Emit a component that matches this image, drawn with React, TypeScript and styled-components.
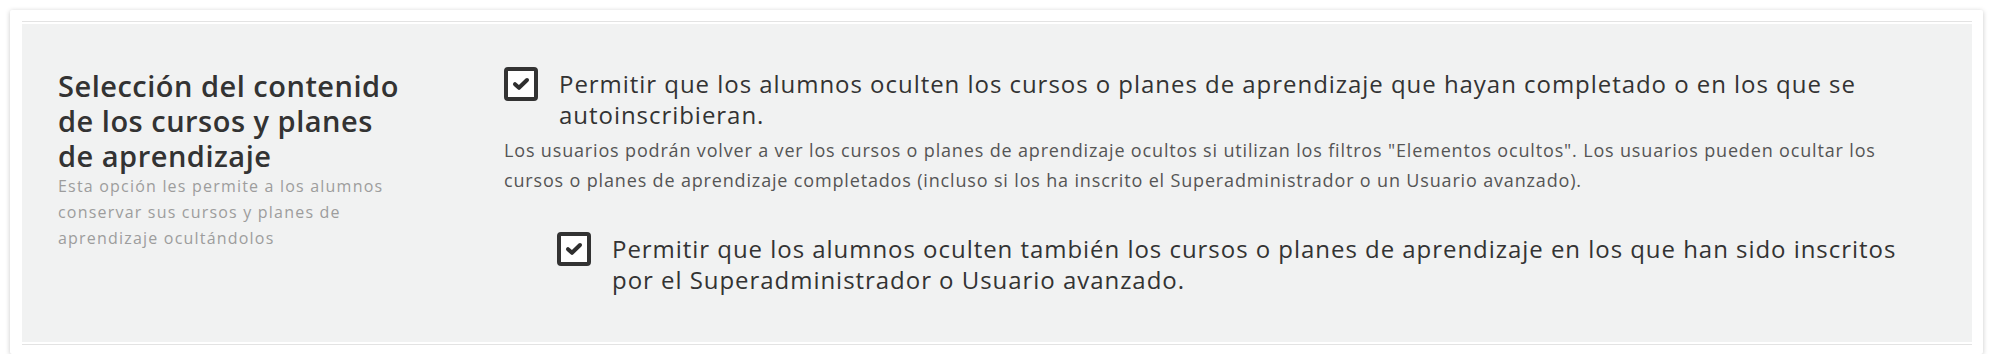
import React, { FunctionComponent } from 'react';
import styled, { createGlobalStyle } from 'styled-components';

const GlobalStyle = createGlobalStyle`
  html, body {
    margin: 0;
    padding: 0;
    background: #ffffff;
  }
  body {
    font-family: 'Open Sans', 'Noto Sans', 'Liberation Sans', sans-serif;
  }
`;

const Page = styled.div`
  padding: 10px 11px 0 10px;
`;

const Card = styled.div`
  background: #ffffff;
  border-radius: 2px;
  box-shadow: 0 1px 5px rgba(0, 0, 0, 0.22);
  padding: 11px 11px 9px 12px;
`;

const Panel = styled.div`
  border-top: 1px solid #e3e3e3;
  border-bottom: 1px solid #e3e3e3;
  padding: 2px 0;
`;

const Section = styled.div`
  display: flex;
  align-items: flex-start;
  background: #f1f2f2;
  padding: 44px 56px 47px 36px;
`;

const Aside = styled.div`
  flex: none;
  width: 348px;
  margin-right: 98px;
`;

const Title = styled.h2`
  margin: 0;
  font-size: 29px;
  font-weight: 600;
  line-height: 35px;
  letter-spacing: 0.5px;
  color: #333333;
`;

const Description = styled.p`
  margin: 0;
  font-size: 16px;
  line-height: 26px;
  letter-spacing: 1.2px;
  color: #9d9d9d;
`;

const Content = styled.div`
  flex: 1;
  min-width: 0;
`;

const OptionRow = styled.label<{ $indent?: number; $spaceTop?: number }>`
  display: flex;
  align-items: flex-start;
  gap: 21px;
  margin-left: ${(p) => p.$indent || 0}px;
  margin-top: ${(p) => p.$spaceTop || 0}px;
  cursor: pointer;
`;

const Box = styled.span`
  flex: none;
  display: flex;
  align-items: center;
  justify-content: center;
  box-sizing: border-box;
  width: 34px;
  height: 34px;
  border: 4px solid #333333;
  border-radius: 4px;
  background: #ffffff;
  margin-top: -1px;
`;

const OptionText = styled.span`
  font-size: 24px;
  line-height: 31px;
  letter-spacing: 0.96px;
  color: #333333;
`;

const HelpText = styled.p`
  margin: 5px 0 0;
  font-size: 18px;
  line-height: 30px;
  letter-spacing: 0.84px;
  color: #555555;
`;

const Checkbox: FunctionComponent = () => (
  <Box>
    <svg width="18" height="14" viewBox="0 0 18 14" fill="none">
      <path
        d="M3 7.2 L7 10.8 L15 3"
        stroke="#2e2e2e"
        strokeWidth="4"
        strokeLinecap="round"
        strokeLinejoin="round"
      />
    </svg>
  </Box>
);

const App: FunctionComponent = () => (
  <>
    <GlobalStyle />
    <Page>
      <Card>
        <Panel>
          <Section>
            <Aside>
              <Title>Selección del contenido de los cursos y planes de aprendizaje</Title>
              <Description>
                Esta opción les permite a los alumnos conservar sus cursos y planes de aprendizaje
                ocultándolos
              </Description>
            </Aside>
            <Content>
              <OptionRow>
                <Checkbox />
                <OptionText>
                  Permitir que los alumnos oculten los cursos o planes de aprendizaje que hayan
                  completado o en los que se autoinscribieran.
                </OptionText>
              </OptionRow>
              <HelpText>
                Los usuarios podrán volver a ver los cursos o planes de aprendizaje ocultos si
                utilizan los filtros "Elementos ocultos". Los usuarios pueden ocultar los cursos o
                planes de aprendizaje completados (incluso si los ha inscrito el Superadministrador
                o un Usuario avanzado).
              </HelpText>
              <OptionRow $indent={53} $spaceTop={38}>
                <Checkbox />
                <OptionText>
                  Permitir que los alumnos oculten también los cursos o planes de aprendizaje en los
                  que han sido inscritos por el Superadministrador o Usuario avanzado.
                </OptionText>
              </OptionRow>
            </Content>
          </Section>
        </Panel>
      </Card>
    </Page>
  </>
);

export default App;
